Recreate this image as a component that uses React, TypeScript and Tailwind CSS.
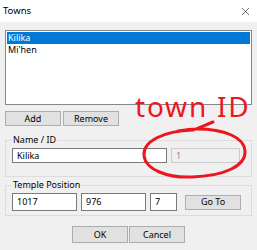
import { X } from "lucide-react";

function Btn({ label, className = "" }: { label: string; className?: string }) {
  return (
    <button
      className={`flex items-center justify-center border border-[#adadad] bg-[#e1e1e1] text-black ${className}`}
    >
      {label}
    </button>
  );
}

function Field({ value, className = "", disabled = false }: { value: string; className?: string; disabled?: boolean }) {
  return (
    <div
      className={`flex items-center border pl-[4px] ${
        disabled ? "border-[#cccccc] bg-[#f0f0f0] text-[#8a8a8a]" : "border-[#7a7a7a] bg-white text-black"
      } ${className}`}
    >
      {value}
    </div>
  );
}

export default function App() {
  return (
    <div
      className="relative flex h-[250px] w-[257px] flex-col overflow-hidden bg-[#f0f0f0] text-[9px] leading-[12px] text-black"
      style={{ fontFamily: '"Noto Sans", "Segoe UI", sans-serif' }}
    >
      {/* title bar */}
      <div className="flex h-[22px] items-center justify-between bg-white pl-[3px] pr-[5px]">
        <span className="text-[9.5px]">Towns</span>
        <X size={13} strokeWidth={1} className="text-black" />
      </div>

      <div className="flex flex-col px-[5px] pt-[8px]">
        {/* list */}
        <div className="h-[75px] border border-[#828790] bg-white p-[1px]">
          <div className="h-[12px] bg-[#0078d7] pl-[1px] text-white">Kilika</div>
          <div className="h-[12px] pl-[1px]">Mi'hen</div>
        </div>

        <div className="mt-[6px] flex gap-[2px]">
          <Btn label="Add" className="h-[15px] w-[56px]" />
          <Btn label="Remove" className="h-[15px] w-[56px]" />
        </div>

        {/* Name / ID */}
        <div className="mt-[14px] h-[37px] border border-[#dcdcdc] pl-[6px]">
          <div className="-mt-[7px] w-fit bg-[#f0f0f0] px-[1px]">Name / ID</div>
          <div className="mt-[2px] flex gap-[4px]">
            <Field value="Kilika" className="h-[15px] w-[155px]" />
            <Field value="1" disabled className="h-[15px] w-[69px]" />
          </div>
        </div>

        {/* Temple Position */}
        <div className="mt-[8px] h-[31px] border border-[#dcdcdc] pl-[6px]">
          <div className="-mt-[7px] w-fit bg-[#f0f0f0] px-[1px]">Temple Position</div>
          <div className="mt-[2px] flex items-center gap-[4px]">
            <Field value="1017" className="h-[18px] w-[65px]" />
            <Field value="976" className="h-[18px] w-[65px]" />
            <Field value="7" className="h-[18px] w-[27px]" />
            <Btn label="Go To" className="ml-[4px] h-[15px] w-[56px]" />
          </div>
        </div>

        <div className="mt-[10px] flex justify-center gap-[1px]">
          <Btn label="OK" className="h-[17px] w-[56px]" />
          <Btn label="Cancel" className="h-[17px] w-[56px]" />
        </div>
      </div>

      {/* red annotation */}
      <div
        className="absolute left-[135px] top-[92px] text-[28px] leading-[28px] tracking-[1.8px] text-[#ec1620]"
        style={{ fontFamily: '"Noto Sans", sans-serif' }}
      >
        town ID
      </div>
      <svg className="pointer-events-none absolute inset-0" width="257" height="250" viewBox="0 0 257 250">
        <path
          d="M213 122 C205 125 199 128 193 130 C162 131 143 142 144 155 C145 170 168 178 192 177 C224 176 246 166 245 151 C244 137 224 129 197 129 C190 129 184 130 178 131"
          fill="none"
          stroke="#ec1620"
          strokeWidth="3"
          strokeLinecap="round"
        />
      </svg>
    </div>
  );
}
